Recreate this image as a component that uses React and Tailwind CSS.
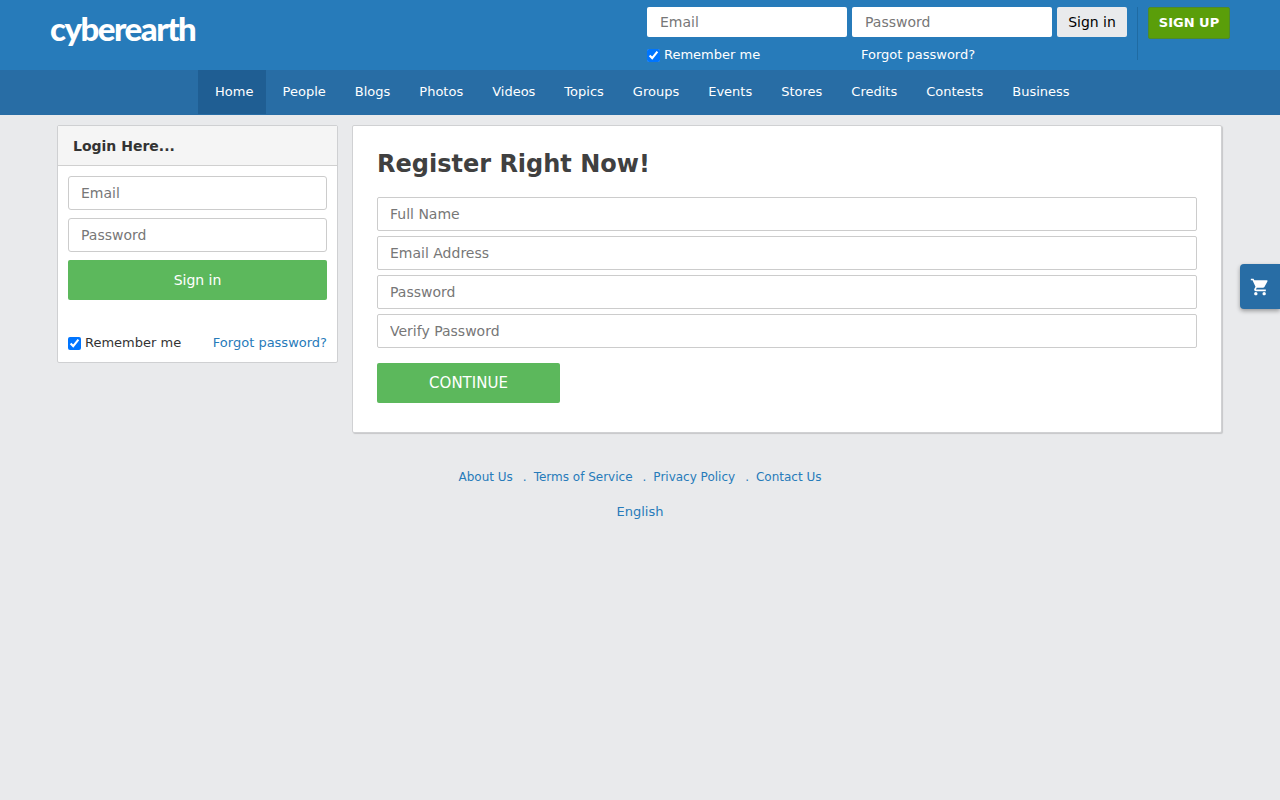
import React from "react";
import { MdShoppingCart } from "react-icons/md";

const navItems = ["People", "Blogs", "Photos", "Videos", "Topics", "Groups", "Events", "Stores", "Credits", "Contests", "Business"];
const footerLinks = ["About Us", "Terms of Service", "Privacy Policy", "Contact Us"];
const registerFields = ["Full Name", "Email Address", "Password", "Verify Password"];

const Header = () => (
  <div className="h-[70px] bg-[#277bba] flex">
    <div className="w-[647px] pl-[50px] pt-[5px]">
      <span className="block text-[33px] leading-[46px] font-black text-white tracking-[-1.5px] font-['Lato',sans-serif]">
        cyberearth
      </span>
    </div>
    <div className="w-[490px] pt-[7px]">
      <div className="flex gap-[5px]">
        <input
          placeholder="Email"
          className="w-[200px] h-[30px] px-[13px] bg-white rounded-[2px] text-[14px] text-[#333] placeholder:text-[#777] outline-none"
        />
        <input
          placeholder="Password"
          className="w-[200px] h-[30px] px-[13px] bg-white rounded-[2px] text-[14px] text-[#333] placeholder:text-[#777] outline-none"
        />
        <button className="w-[70px] h-[30px] bg-[#e9eaec] rounded-[2px] text-[14px] text-black">Sign in</button>
      </div>
      <div className="flex items-center mt-[9px] h-[18px] text-[13px] text-white">
        <input type="checkbox" defaultChecked className="w-[13px] h-[13px] m-0" />
        <span className="ml-[4px] w-[197px]">Remember me</span>
        <a>Forgot password?</a>
      </div>
    </div>
    <div className="mt-[7px] h-[53px] border-l border-[#1f6ba3] pl-[10px]">
      <button className="w-[82px] h-[32px] bg-[#5a9e0a] border border-[#4d8a2c] rounded-[2px] text-[13px] font-bold text-white">
        SIGN UP
      </button>
    </div>
  </div>
);

const Nav = () => (
  <div className="h-[45px] bg-[#286da5] pl-[198px] flex text-[13px] text-white">
    <a className="h-[44px] flex items-center pl-[17px] pr-[13px] mr-[16.2px] bg-[#1f5e93]">Home</a>
    {navItems.map((item) => (
      <a key={item} className="h-[44px] flex items-center mr-[29px]">
        {item}
      </a>
    ))}
  </div>
);

const LoginPanel = () => (
  <div className="w-[281px] h-[238px] bg-white border border-[#cfd0d2] rounded-[2px]">
    <div className="h-[40px] bg-[#f5f5f5] border-b border-[#d0d0d0] pl-[15px] pt-[1px] flex items-center text-[14px] font-bold text-[#333]">
      Login Here...
    </div>
    <div className="px-[10px] pt-[10px] flex flex-col gap-[8px]">
      <input
        placeholder="Email"
        className="h-[34px] px-[12px] border border-[#ccc] rounded-[3px] text-[14px] placeholder:text-[#777] outline-none"
      />
      <input
        placeholder="Password"
        className="h-[34px] px-[12px] border border-[#ccc] rounded-[3px] text-[14px] placeholder:text-[#777] outline-none"
      />
      <button className="h-[40px] bg-[#5cb85c] rounded-[2px] text-[14px] text-white">Sign in</button>
    </div>
    <div className="mt-[33px] px-[10px] flex items-center justify-between text-[13px]">
      <label className="flex items-center text-[#333]">
        <input type="checkbox" defaultChecked className="w-[13px] h-[13px] mt-[2px] mr-[4px] mb-0 ml-0" />
        Remember me
      </label>
      <a className="text-[#277bba]">Forgot password?</a>
    </div>
  </div>
);

const RegisterCard = () => (
  <div className="w-[870px] h-[308px] bg-white border border-[#d0d1d3] rounded-[2px] shadow-[1px_1px_1px_rgba(0,0,0,0.15)] px-[24px] pt-[23px]">
    <h1 className="text-[24px] leading-[30px] font-bold text-[#404040]">Register Right Now!</h1>
    <div className="mt-[18px] flex flex-col gap-[5px]">
      {registerFields.map((field) => (
        <input
          key={field}
          placeholder={field}
          className="h-[34px] px-[12px] border border-[#ccc] rounded-[2px] text-[14px] placeholder:text-[#777] outline-none"
        />
      ))}
    </div>
    <button className="mt-[15px] w-[183px] h-[40px] bg-[#5cb85c] rounded-[2px] text-[15px] text-white">CONTINUE</button>
  </div>
);

const Footer = () => (
  <div className="mt-[36px] text-center text-[#277bba]">
    <div className="h-[16px] flex justify-center items-center text-[12px]">
      {footerLinks.map((link, i) => (
        <React.Fragment key={link}>
          {i > 0 && <span className="ml-[10px] mr-[7px]">.</span>}
          <a>{link}</a>
        </React.Fragment>
      ))}
    </div>
    <div className="mt-[18px] text-[13px] leading-[18px]">English</div>
  </div>
);

export default function App() {
  return (
    <div className="relative min-h-[800px] bg-[#e9eaec] font-['DejaVu_Sans',sans-serif]">
      <Header />
      <Nav />
      <div className="ml-[57px] mt-[10px] flex gap-[14px]">
        <LoginPanel />
        <RegisterCard />
      </div>
      <Footer />
      <div className="absolute right-0 top-[264px] w-[40px] h-[45px] bg-[#286da5] rounded-l-[4px] shadow-[0_2px_4px_rgba(0,0,0,0.35)] flex items-center justify-center">
        <MdShoppingCart size={20} className="text-white" />
      </div>
    </div>
  );
}
